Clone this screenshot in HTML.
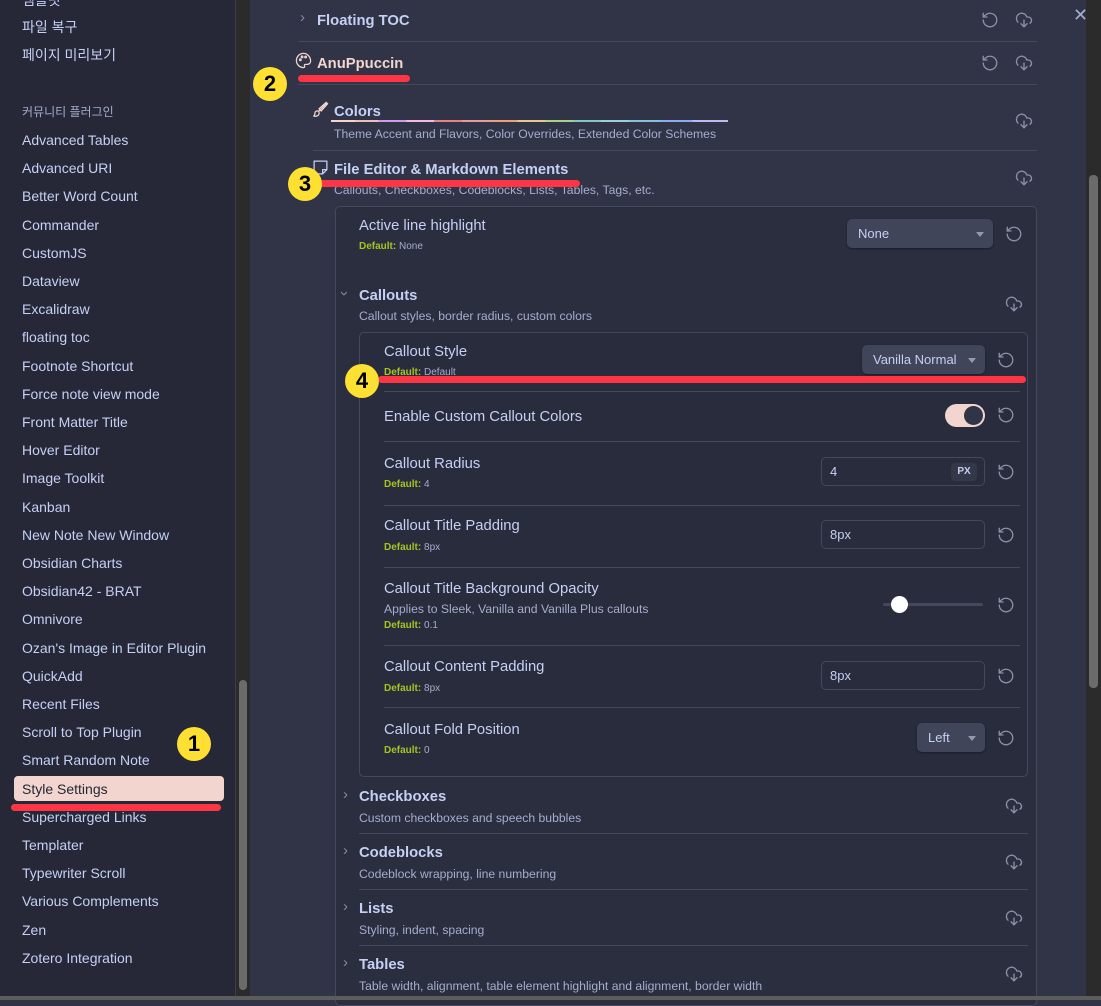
<!DOCTYPE html>
<html><head><meta charset="utf-8"><style>
*{margin:0;padding:0;box-sizing:border-box}
body{width:1101px;height:1000px;overflow:hidden;background:#303446;font-family:"Liberation Sans","Noto Sans CJK KR",sans-serif;color:#c6d0f5;position:relative}
.a{position:absolute;white-space:nowrap}
.side{left:0;top:0;width:236px;height:1000px;background:#262837;border-right:1px solid #3a3d50}
.si{position:absolute;left:22px;font-size:14px;color:#c6d0f5;line-height:16px}
.t{position:absolute;font-size:14.8px;line-height:18px;color:#c6d0f5;white-space:nowrap;margin-top:2px}
.b{font-weight:bold}
.d{position:absolute;font-size:12.2px;color:#a5adce;white-space:nowrap;line-height:14px;margin-top:1px}
.df{position:absolute;font-size:10px;color:#a5adce;white-space:nowrap;line-height:12px;margin-top:1px}
.df b{color:#a6c320}
.ln{position:absolute;height:1px;background:#44485c}
.ic{position:absolute;width:18px;height:18px}
.dd{position:absolute;background:#414559;border-radius:5px;box-shadow:0 1px 2px rgba(0,0,0,.4);font-size:13px;color:#c6d0f5;line-height:29px;padding-left:11px}
.dd:after{content:"";position:absolute;right:9px;top:13px;border:4px solid transparent;border-top:5px solid #9399b2}
.in{position:absolute;border:1px solid #44485c;border-radius:5px;background:#292c3c;font-size:13px;line-height:27px;padding-left:8px;color:#c6d0f5}
.y{position:absolute;width:34px;height:34px;border-radius:50%;background:#fde032;color:#000;font-weight:bold;font-size:22px;line-height:34px;text-align:center}
.r{position:absolute;height:7px;background:#fd3545;border-radius:4px}
.ch{position:absolute;font-size:15px;color:#838ba7}
</style></head><body>
<svg width="0" height="0" style="position:absolute"><defs>
<symbol id="rs" viewBox="0 0 24 24"><g fill="none" stroke="#8a90a8" stroke-width="1.8" stroke-linecap="round" stroke-linejoin="round"><path d="M3 12a9 9 0 1 0 3-6.7L3 8"/><path d="M3 3v5h5"/></g></symbol>
<symbol id="cl" viewBox="0 0 24 24"><g fill="none" stroke="#8a90a8" stroke-width="1.8" stroke-linecap="round" stroke-linejoin="round"><path d="M4 14.9A7 7 0 1 1 15.7 8h1.8a4.5 4.5 0 0 1 2.5 8.2"/><path d="M12 12v9"/><path d="m8 17 4 4 4-4"/></g></symbol>
</defs></svg>

<div class="a side"></div>
<div class="si" style="top:-8px">템플릿</div>
<div class="si" style="top:19px">파일 복구</div>
<div class="si" style="top:47px">페이지 미리보기</div>
<div class="si" style="top:104px;font-size:12px;color:#a5adce">커뮤니티 플러그인</div>
<div style="position:absolute;left:14px;top:776px;width:210px;height:25px;background:#f2d5cf;border-radius:4px"></div>
<div id="list"></div>
<script>
var n=["Advanced Tables","Advanced URI","Better Word Count","Commander","CustomJS","Dataview","Excalidraw","floating toc","Footnote Shortcut","Force note view mode","Front Matter Title","Hover Editor","Image Toolkit","Kanban","New Note New Window","Obsidian Charts","Obsidian42 - BRAT","Omnivore","Ozan's Image in Editor Plugin","QuickAdd","Recent Files","Scroll to Top Plugin","Smart Random Note","Style Settings","Supercharged Links","Templater","Typewriter Scroll","Various Complements","Zen","Zotero Integration"];
var h="";for(var i=0;i<n.length;i++){var y=Math.round(132+i*28.2);h+='<div class="si" style="top:'+y+'px'+(i==23?';color:#232634':'')+'">'+n[i]+'</div>';}
document.getElementById("list").innerHTML=h;
</script>
<div class="a" style="left:236px;top:0;width:14px;height:1000px;background:#2b2b2b"></div>
<div class="a" style="left:239px;top:680px;width:8px;height:310px;background:#6b6b6b;border-radius:4px"></div>
<div class="a" style="left:1086px;top:0;width:15px;height:1000px;background:#2b2b2b"></div>
<div class="a" style="left:1089px;top:175px;width:9px;height:513px;background:#6b6b6b;border-radius:4px"></div>
<div class="a" style="left:1073px;top:5px;font-size:18px;color:#a5adce">✕</div>

<div class="ch" style="left:300px;top:9px">›</div>
<div class="t b" style="left:317px;top:10px">Floating TOC</div>
<svg class="ic" style="left:981px;top:11px"><use href="#rs"/></svg>
<svg class="ic" style="left:1015px;top:11px"><use href="#cl"/></svg>
<div class="ln" style="left:298px;top:41px;width:739px"></div>
<svg class="ic" style="left:295px;top:52px;width:17px;height:17px" viewBox="0 0 24 24"><g fill="none" stroke="#f2d5cf" stroke-width="1.8"><path d="M12 2a10 10 0 0 0 0 20c1.5 0 2-1 1.5-2s-.5-2.5 1.5-2.5h2.5A4.5 4.5 0 0 0 22 13c0-6-4.5-11-10-11z"/><circle cx="7.5" cy="11" r="1.2"/><circle cx="10" cy="6.8" r="1.2"/><circle cx="15" cy="7" r="1.2"/></g></svg>
<div class="t b" style="left:317px;top:53px;color:#f2d5cf">AnuPpuccin</div>
<svg class="ic" style="left:981px;top:54px"><use href="#rs"/></svg>
<svg class="ic" style="left:1015px;top:54px"><use href="#cl"/></svg>
<div class="ln" style="left:298px;top:84px;width:739px"></div>
<svg class="ic" style="left:312px;top:101px;width:17px;height:17px" viewBox="0 0 24 24"><g fill="none" stroke="#f2d5cf" stroke-width="1.8" stroke-linecap="round"><path d="M21 3 10 14"/><path d="M20 2l2 2-9 10-3-3z"/><path d="M8 14c-3 0-4 2-4 4s-1 3-2 3c2 1 7 1 8-3 .5-2-1-4-2-4z"/></g></svg>
<div class="t b" style="left:334px;top:101px">Colors</div>
<div class="a" style="left:331px;top:120px;width:397px;height:2px;background:linear-gradient(90deg,#f2d5cf 0 6%,#eebebe 6% 12%,#ca9ee6 12% 19%,#f4b8e4 19% 26%,#e78284 26% 33%,#ea999c 33% 40%,#ef9f76 40% 47%,#e5c890 47% 54%,#a6d189 54% 61%,#81c8be 61% 68%,#99d1db 68% 75%,#85c1dc 75% 83%,#8caaee 83% 91%,#babbf1 91%)"></div>
<div class="d" style="left:334px;top:126px">Theme Accent and Flavors, Color Overrides, Extended Color Schemes</div>
<svg class="ic" style="left:1015px;top:112px"><use href="#cl"/></svg>
<div class="ln" style="left:313px;top:150px;width:724px"></div>
<svg class="ic" style="left:312px;top:159px;width:17px;height:17px" viewBox="0 0 24 24"><g fill="none" stroke="#c6d0f5" stroke-width="1.8" stroke-linejoin="round"><path d="M3 3h18v12l-6 6H3z"/><path d="M21 15h-6v6"/></g></svg>
<div class="t b" style="left:334px;top:159px">File Editor &amp; Markdown Elements</div>
<div class="d" style="left:334px;top:182px">Callouts, Checkboxes, Codeblocks, Lists, Tables, Tags, etc.</div>
<svg class="ic" style="left:1015px;top:169px"><use href="#cl"/></svg>

<div class="a" style="left:335px;top:206px;width:702px;height:800px;border:1px solid #44485c;border-radius:5px;background:#2b2e3f"></div>
<div class="t" style="left:359px;top:215px">Active line highlight</div>
<div class="df" style="left:359px;top:240px"><b>Default:</b> None</div>
<div class="dd" style="left:847px;top:219px;width:146px">None</div>
<svg class="ic" style="left:1005px;top:225px"><use href="#rs"/></svg>

<div class="ch" style="left:342px;top:285px;transform:rotate(90deg)">›</div>
<div class="t b" style="left:359px;top:285px">Callouts</div>
<div class="d" style="left:359px;top:308px">Callout styles, border radius, custom colors</div>
<svg class="ic" style="left:1005px;top:295px"><use href="#cl"/></svg>

<div class="a" style="left:359px;top:332px;width:669px;height:445px;border:1px solid #44485c;border-radius:5px;background:#292c3c"></div>
<div class="t" style="left:384px;top:341px">Callout Style</div>
<div class="df" style="left:384px;top:366px"><b>Default:</b> Default</div>
<div class="dd" style="left:862px;top:345px;width:123px">Vanilla Normal</div>
<svg class="ic" style="left:997px;top:351px"><use href="#rs"/></svg>
<div class="ln" style="left:384px;top:391px;width:636px"></div>

<div class="t" style="left:384px;top:406px">Enable Custom Callout Colors</div>
<div class="a" style="left:945px;top:404px;width:40px;height:23px;border-radius:12px;background:#f2d5cf"></div>
<div class="a" style="left:964px;top:406px;width:19px;height:19px;border-radius:50%;background:#303446"></div>
<svg class="ic" style="left:997px;top:406px"><use href="#rs"/></svg>
<div class="ln" style="left:384px;top:441px;width:636px"></div>

<div class="t" style="left:384px;top:453px">Callout Radius</div>
<div class="df" style="left:384px;top:478px"><b>Default:</b> 4</div>
<div class="in" style="left:821px;top:457px;width:164px;height:29px">4</div>
<div class="a" style="left:951px;top:463px;width:26px;height:18px;background:#343849;border-radius:4px;font-size:10px;font-weight:bold;text-align:center;line-height:18px;color:#c6d0f5">PX</div>
<svg class="ic" style="left:997px;top:463px"><use href="#rs"/></svg>
<div class="ln" style="left:384px;top:505px;width:636px"></div>

<div class="t" style="left:384px;top:515px">Callout Title Padding</div>
<div class="df" style="left:384px;top:541px"><b>Default:</b> 8px</div>
<div class="in" style="left:821px;top:520px;width:164px;height:29px">8px</div>
<svg class="ic" style="left:997px;top:526px"><use href="#rs"/></svg>
<div class="ln" style="left:384px;top:567px;width:636px"></div>

<div class="t" style="left:384px;top:578px">Callout Title Background Opacity</div>
<div class="d" style="left:384px;top:601px">Applies to Sleek, Vanilla and Vanilla Plus callouts</div>
<div class="df" style="left:384px;top:619px"><b>Default:</b> 0.1</div>
<div class="a" style="left:883px;top:603px;width:100px;height:3px;background:#44485c;border-radius:2px"></div>
<div class="a" style="left:891px;top:596px;width:17px;height:17px;border-radius:50%;background:#fff"></div>
<svg class="ic" style="left:997px;top:596px"><use href="#rs"/></svg>
<div class="ln" style="left:384px;top:645px;width:636px"></div>

<div class="t" style="left:384px;top:656px">Callout Content Padding</div>
<div class="df" style="left:384px;top:682px"><b>Default:</b> 8px</div>
<div class="in" style="left:821px;top:661px;width:164px;height:29px">8px</div>
<svg class="ic" style="left:997px;top:667px"><use href="#rs"/></svg>
<div class="ln" style="left:384px;top:707px;width:636px"></div>

<div class="t" style="left:384px;top:719px">Callout Fold Position</div>
<div class="df" style="left:384px;top:744px"><b>Default:</b> 0</div>
<div class="dd" style="left:917px;top:723px;width:68px">Left</div>
<svg class="ic" style="left:997px;top:729px"><use href="#rs"/></svg>

<div class="ch" style="left:343px;top:786px">›</div>
<div class="t b" style="left:359px;top:786px">Checkboxes</div>
<div class="d" style="left:359px;top:810px">Custom checkboxes and speech bubbles</div>
<svg class="ic" style="left:1005px;top:797px"><use href="#cl"/></svg>
<div class="ln" style="left:359px;top:833px;width:669px"></div>
<div class="ch" style="left:343px;top:842px">›</div>
<div class="t b" style="left:359px;top:842px">Codeblocks</div>
<div class="d" style="left:359px;top:866px">Codeblock wrapping, line numbering</div>
<svg class="ic" style="left:1005px;top:853px"><use href="#cl"/></svg>
<div class="ln" style="left:359px;top:889px;width:669px"></div>
<div class="ch" style="left:343px;top:898px">›</div>
<div class="t b" style="left:359px;top:898px">Lists</div>
<div class="d" style="left:359px;top:922px">Styling, indent, spacing</div>
<svg class="ic" style="left:1005px;top:909px"><use href="#cl"/></svg>
<div class="ln" style="left:359px;top:945px;width:669px"></div>
<div class="ch" style="left:343px;top:954px">›</div>
<div class="t b" style="left:359px;top:954px">Tables</div>
<div class="d" style="left:359px;top:978px">Table width, alignment, table element highlight and alignment, border width</div>
<svg class="ic" style="left:1005px;top:965px"><use href="#cl"/></svg>
<div class="a" style="left:0;top:996px;width:1101px;height:4px;background:#5c5c5c"></div>

<div class="r" style="left:298px;top:75px;width:112px"></div>
<div class="r" style="left:298px;top:180px;width:282px"></div>
<div class="r" style="left:378px;top:376px;width:648px"></div>
<div class="r" style="left:11px;top:804px;width:210px"></div>
<div class="y" style="left:177px;top:727px">1</div>
<div class="y" style="left:253px;top:67px">2</div>
<div class="y" style="left:288px;top:167px">3</div>
<div class="y" style="left:345px;top:364px">4</div>
</body></html>
